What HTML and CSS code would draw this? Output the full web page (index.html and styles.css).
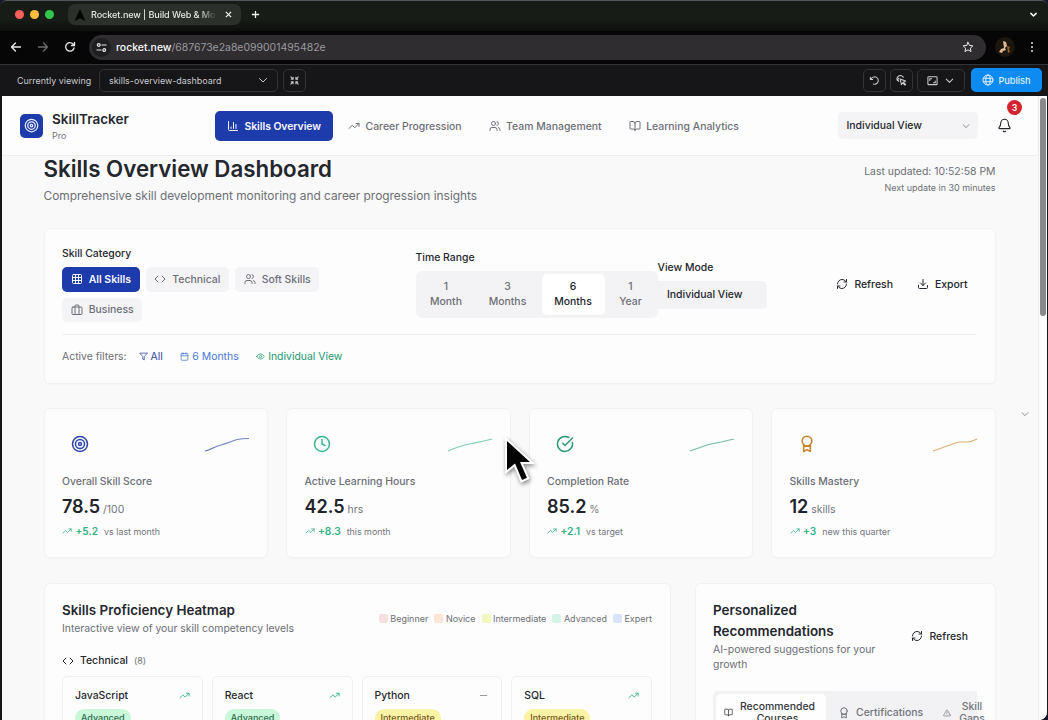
FILE: index.html
```html
<!DOCTYPE html>
<html lang="en">
<head>
    <meta charset="UTF-8">
    <meta name="viewport" content="width=device-width, initial-scale=1.0">
    <title>Rocket.new | Build Web &amp; Mobile Apps</title>
    <link rel="stylesheet" href="styles.css">
</head>
<body>
    <svg class="sprite" xmlns="http://www.w3.org/2000/svg">
        <symbol id="target" viewBox="0 0 24 24"><circle cx="12" cy="12" r="10"/><circle cx="12" cy="12" r="6"/><circle cx="12" cy="12" r="2"/></symbol>
        <symbol id="chart" viewBox="0 0 24 24"><path d="M3 3v16a2 2 0 0 0 2 2h16M8 17v-3M13 17V5M18 17V9"/></symbol>
        <symbol id="trend" viewBox="0 0 24 24"><path d="M22 7l-8.5 8.5-5-5L2 17M16 7h6v6"/></symbol>
        <symbol id="users" viewBox="0 0 24 24"><path d="M16 21v-2a4 4 0 0 0-4-4H6a4 4 0 0 0-4 4v2M22 21v-2a4 4 0 0 0-3-3.87M16 3.13a4 4 0 0 1 0 7.75"/><circle cx="9" cy="7" r="4"/></symbol>
        <symbol id="book" viewBox="0 0 24 24"><path d="M12 7v14M3 18a1 1 0 0 1-1-1V4a1 1 0 0 1 1-1h5a4 4 0 0 1 4 4 4 4 0 0 1 4-4h5a1 1 0 0 1 1 1v13a1 1 0 0 1-1 1h-6a3 3 0 0 0-3 3 3 3 0 0 0-3-3z"/></symbol>
        <symbol id="chevron" viewBox="0 0 24 24"><path d="M5 9l7 7 7-7"/></symbol>
        <symbol id="bell" viewBox="0 0 24 24"><path d="M10.3 21a1.94 1.94 0 0 0 3.4 0M3.3 15.3A1 1 0 0 0 4 17h16a1 1 0 0 0 .7-1.7C19.4 14 18 12.5 18 8A6 6 0 0 0 6 8c0 4.5-1.4 6-2.7 7.3"/></symbol>
        <symbol id="grid" viewBox="0 0 24 24"><rect x="3" y="3" width="18" height="18" rx="2"/><path d="M3 9h18M3 15h18M9 3v18M15 3v18"/></symbol>
        <symbol id="code" viewBox="0 0 24 24"><path d="M16 18l6-6-6-6M8 6l-6 6 6 6"/></symbol>
        <symbol id="case" viewBox="0 0 24 24"><rect x="2" y="6" width="20" height="15" rx="2"/><path d="M8 21V4a2 2 0 0 1 2-2h4a2 2 0 0 1 2 2v17"/></symbol>
        <symbol id="refresh" viewBox="0 0 24 24"><path d="M3 12a9 9 0 0 1 9-9 9.75 9.75 0 0 1 6.74 2.74L21 8M21 3v5h-5M21 12a9 9 0 0 1-9 9 9.75 9.75 0 0 1-6.74-2.74L3 16M8 16H3v5"/></symbol>
        <symbol id="download" viewBox="0 0 24 24"><path d="M21 15v4a2 2 0 0 1-2 2H5a2 2 0 0 1-2-2v-4M7 10l5 5 5-5M12 15V3"/></symbol>
        <symbol id="filter" viewBox="0 0 24 24"><path d="M22 3H2l8 9.46V19l4 2v-8.54z"/></symbol>
        <symbol id="calendar" viewBox="0 0 24 24"><rect x="3" y="4" width="18" height="18" rx="2"/><path d="M8 2v4M16 2v4M3 10h18"/></symbol>
        <symbol id="eye" viewBox="0 0 24 24"><path d="M2 12s4-7 10-7 10 7 10 7-4 7-10 7S2 12 2 12z"/><circle cx="12" cy="12" r="3"/></symbol>
        <symbol id="clock" viewBox="0 0 24 24"><circle cx="12" cy="12" r="10"/><path d="M12 6v6l4 2"/></symbol>
        <symbol id="check" viewBox="0 0 24 24"><path d="M21.8 10A10 10 0 1 1 17 3.34M9 11l3 3L22 4"/></symbol>
        <symbol id="award" viewBox="0 0 24 24"><circle cx="12" cy="8" r="6.500"/><path d="M7.500 13V22l4.500-2.500 4.500 2.500v-9M8 15.500q4-2 8 0"/></symbol>
        <symbol id="minus" viewBox="0 0 24 24"><path d="M5 12h14"/></symbol>
        <symbol id="alert" viewBox="0 0 24 24"><path d="M21.7 18l-8-14a2 2 0 0 0-3.4 0l-8 14A2 2 0 0 0 4 21h16a2 2 0 0 0 1.7-3zM12 9v4M12 17h.01"/></symbol>
        <symbol id="arrow" viewBox="0 0 24 24"><path d="M21 12H3M11 4l-8 8 8 8"/></symbol>
        <symbol id="reload" viewBox="0 0 24 24"><path d="M20 14a8.5 8.5 0 1 1-2-8l3 3M21 3v6h-6"/></symbol>
        <symbol id="tune" viewBox="0 0 24 24"><circle cx="6" cy="6.500" r="3"/><path d="M13 6.500h9M2 17.500h9"/><circle cx="18" cy="17.500" r="3"/></symbol>
        <symbol id="star" viewBox="0 0 24 24"><path d="M12 2.500l2.900 6.300 6.900.8-5.100 4.700 1.400 6.800-6.100-3.400-6.100 3.400 1.400-6.800-5.100-4.700 6.900-.8z"/></symbol>
        <symbol id="shrink" viewBox="0 0 24 24"><path d="M4 4l5 5M9 5v4H5M20 4l-5 5M15 5v4h4M4 20l5-5M9 19v-4H5M20 20l-5-5M15 19v-4h4"/></symbol>
        <symbol id="undo" viewBox="0 0 24 24"><path d="M3 5v5h5M3.500 10C6 5.500 9 4 12.500 4a8 8 0 1 1-3 15.500"/></symbol>
        <symbol id="pick" viewBox="0 0 24 24"><path d="M9 9l12 4-5 2.500 5 5-1.500 1.500-5-5L12 21zM3 12a7 7 0 0 1 13-7M6 14a5 5 0 0 1 0-7"/></symbol>
        <symbol id="screen" viewBox="0 0 24 24"><rect x="2" y="4" width="20" height="17" rx="1.500"/><path d="M6 12V8h4M18 13v4h-4"/></symbol>
        <symbol id="globe" viewBox="0 0 24 24"><circle cx="12" cy="12" r="10"/><ellipse cx="12" cy="12" rx="4.500" ry="10"/><path d="M3 8.500h18M3 15.500h18"/></symbol>
    </svg>

    <div class="window">
        <div class="tab-strip">
            <div class="lights"><i class="red"></i><i class="yellow"></i><i class="green"></i></div>
            <div class="tab">
                <svg class="tab-logo" viewBox="0 0 12 12"><path d="M6 0l5.500 12L6 9.500.5 12z"/></svg>
                <span class="tab-title">Rocket.new | Build Web &amp; Mo</span>
                <svg class="tab-close" viewBox="0 0 8 8"><path d="M1 1l6 6M7 1L1 7"/></svg>
            </div>
            <svg class="tab-add" viewBox="0 0 10 10"><path d="M5 1v8M1 5h8"/></svg>
            <svg class="icon tab-more"><use href="#chevron"/></svg>
        </div>
        <div class="address-row">
            <svg class="icon nav-btn"><use href="#arrow"/></svg>
            <svg class="icon nav-btn forward"><use href="#arrow"/></svg>
            <svg class="icon nav-btn"><use href="#reload"/></svg>
            <div class="address">
                <span class="site-info"><svg class="icon"><use href="#tune"/></svg></span>
                <span class="url"><b>rocket.new</b>/687673e2a8e099001495482e</span>
                <svg class="icon star"><use href="#star"/></svg>
            </div>
            <div class="avatar">
                <svg viewBox="0 0 20 20"><path class="skin" d="M8 4l3 1 1 4-2 2 1 2-3 1-1 2-3-1 2-3 3-1z"/><path class="gold" d="M12 9l3 1-1 2 1 3-2 1z"/></svg>
            </div>
            <div class="dots"><i></i><i></i><i></i></div>
        </div>
        <div class="toolbar">
            <span class="viewing">Currently viewing</span>
            <div class="page-select">skills-overview-dashboard <svg class="icon"><use href="#chevron"/></svg></div>
            <div class="tool"><svg class="icon"><use href="#shrink"/></svg></div>
            <div class="tool-group">
                <div class="tool"><svg class="icon"><use href="#undo"/></svg></div>
                <div class="tool"><svg class="icon"><use href="#pick"/></svg></div>
                <div class="tool wide"><svg class="icon"><use href="#screen"/></svg><svg class="icon"><use href="#chevron"/></svg></div>
                <div class="publish"><svg class="icon"><use href="#globe"/></svg>Publish</div>
            </div>
        </div>

        <div class="page">
            <header class="site-header">
                <div class="logo"><svg class="icon"><use href="#target"/></svg></div>
                <div class="brand">
                    <div class="brand-name">SkillTracker</div>
                    <div class="brand-plan">Pro</div>
                </div>
                <nav class="nav">
                    <a class="nav-link active"><svg class="icon"><use href="#chart"/></svg>Skills Overview</a>
                    <a class="nav-link"><svg class="icon"><use href="#trend"/></svg>Career Progression</a>
                    <a class="nav-link"><svg class="icon"><use href="#users"/></svg>Team Management</a>
                    <a class="nav-link"><svg class="icon"><use href="#book"/></svg>Learning Analytics</a>
                </nav>
                <div class="header-select">Individual View <svg class="icon"><use href="#chevron"/></svg></div>
                <div class="bell"><svg class="icon"><use href="#bell"/></svg><span class="count">3</span></div>
            </header>

            <main class="content">
                <section class="heading">
                    <div>
                        <h1>Skills Overview Dashboard</h1>
                        <p>Comprehensive skill development monitoring and career progression insights</p>
                    </div>
                    <div class="updated">
                        <div>Last updated: 10:52:58 PM</div>
                        <small>Next update in 30 minutes</small>
                    </div>
                </section>

                <section class="card filters">
                    <div class="filter-row">
                        <div class="field">
                            <label>Skill Category</label>
                            <div class="chips">
                                <span class="chip active"><svg class="icon"><use href="#grid"/></svg>All Skills</span>
                                <span class="chip"><svg class="icon"><use href="#code"/></svg>Technical</span>
                                <span class="chip"><svg class="icon"><use href="#users"/></svg>Soft Skills</span>
                                <span class="chip"><svg class="icon"><use href="#case"/></svg>Business</span>
                            </div>
                        </div>
                        <div class="field">
                            <label>Time Range</label>
                            <div class="ranges">
                                <span>1<br>Month</span>
                                <span>3<br>Months</span>
                                <span class="active">6<br>Months</span>
                                <span>1<br>Year</span>
                            </div>
                        </div>
                        <div class="field">
                            <label>View Mode</label>
                            <div class="view-mode">Individual View</div>
                        </div>
                        <div class="actions">
                            <span class="action"><svg class="icon"><use href="#refresh"/></svg>Refresh</span>
                            <span class="action"><svg class="icon"><use href="#download"/></svg>Export</span>
                        </div>
                    </div>
                    <div class="active-filters">
                        <span>Active filters:</span>
                        <span class="tag tag-category"><svg class="icon"><use href="#filter"/></svg>All</span>
                        <span class="tag tag-range"><svg class="icon"><use href="#calendar"/></svg>6 Months</span>
                        <span class="tag tag-view"><svg class="icon"><use href="#eye"/></svg>Individual View</span>
                    </div>
                </section>

                <section class="kpis">
                    <div class="card kpi">
                        <div class="kpi-top score"><svg class="icon"><use href="#target"/></svg><svg class="spark" viewBox="0 0 46 18"><path d="M1 16C6 15 9 12.500 14 11S26 7 33 4.500q5-1 12-1"/></svg></div>
                        <div class="kpi-label">Overall Skill Score</div>
                        <div class="kpi-value"><b>78.5</b> /100</div>
                        <div class="kpi-delta"><svg class="icon"><use href="#trend"/></svg><b>+5.2</b> vs last month</div>
                    </div>
                    <div class="card kpi">
                        <div class="kpi-top hours"><svg class="icon"><use href="#clock"/></svg><svg class="spark" viewBox="0 0 46 18"><path d="M1 16C10 12 18 10 25 8.500S38 6 45 4"/></svg></div>
                        <div class="kpi-label">Active Learning Hours</div>
                        <div class="kpi-value"><b>42.5</b> hrs</div>
                        <div class="kpi-delta"><svg class="icon"><use href="#trend"/></svg><b>+8.3</b> this month</div>
                    </div>
                    <div class="card kpi">
                        <div class="kpi-top completion"><svg class="icon"><use href="#check"/></svg><svg class="spark" viewBox="0 0 46 18"><path d="M1 16l17-6q9-2 14-3l13-3"/></svg></div>
                        <div class="kpi-label">Completion Rate</div>
                        <div class="kpi-value"><b>85.2</b> %</div>
                        <div class="kpi-delta"><svg class="icon"><use href="#trend"/></svg><b>+2.1</b> vs target</div>
                    </div>
                    <div class="card kpi">
                        <div class="kpi-top mastery"><svg class="icon"><use href="#award"/></svg><svg class="spark" viewBox="0 0 46 18"><path d="M1 16l17-6q7-3 11-3h7q4-.5 9-3"/></svg></div>
                        <div class="kpi-label">Skills Mastery</div>
                        <div class="kpi-value"><b>12</b> skills</div>
                        <div class="kpi-delta"><svg class="icon"><use href="#trend"/></svg><b>+3</b> new this quarter</div>
                    </div>
                </section>

                <div class="columns">
                    <section class="card heatmap">
                        <div class="heatmap-head">
                            <div>
                                <h2>Skills Proficiency Heatmap</h2>
                                <p>Interactive view of your skill competency levels</p>
                            </div>
                            <div class="legend">
                                <span><i class="beginner"></i>Beginner</span>
                                <span><i class="novice"></i>Novice</span>
                                <span><i class="intermediate"></i>Intermediate</span>
                                <span><i class="advanced"></i>Advanced</span>
                                <span><i class="expert"></i>Expert</span>
                            </div>
                        </div>
                        <div class="group-title"><svg class="icon"><use href="#code"/></svg>Technical <small>(8)</small></div>
                        <div class="skills">
                            <div class="skill"><div class="skill-name">JavaScript <svg class="icon"><use href="#trend"/></svg></div><span class="badge advanced">Advanced</span></div>
                            <div class="skill"><div class="skill-name">React <svg class="icon"><use href="#trend"/></svg></div><span class="badge advanced">Advanced</span></div>
                            <div class="skill"><div class="skill-name">Python <svg class="icon flat"><use href="#minus"/></svg></div><span class="badge intermediate">Intermediate</span></div>
                            <div class="skill"><div class="skill-name">SQL <svg class="icon"><use href="#trend"/></svg></div><span class="badge intermediate">Intermediate</span></div>
                        </div>
                    </section>
                    <section class="card recs">
                        <div class="recs-head">
                            <div>
                                <h2>Personalized Recommendations</h2>
                                <p>AI-powered suggestions for your growth</p>
                            </div>
                            <span class="action"><svg class="icon"><use href="#refresh"/></svg>Refresh</span>
                        </div>
                        <div class="tabs">
                            <span class="rec-tab active"><svg class="icon"><use href="#book"/></svg><em>Recommended<br>Courses</em></span>
                            <span class="rec-tab certs"><svg class="icon"><use href="#award"/></svg><em>Certifications</em></span>
                            <span class="rec-tab gaps"><svg class="icon"><use href="#alert"/></svg><em>Skill<br>Gaps</em></span>
                        </div>
                    </section>
                </div>
            </main>

            <div class="scrollbar"><div class="thumb"></div></div>
            <svg class="icon side-toggle"><use href="#chevron"/></svg>
        </div>
    </div>

    <svg class="cursor" viewBox="0 0 40 52"><path d="M6 7v29l8-6.500 7 16.500 5-2.200L19 28h10z"/></svg>
</body>
</html>
```
FILE: styles.css
```css
* {
    box-sizing: border-box;
}

body {
    margin: 0;
    width: 1048px;
    height: 720px;
    overflow: hidden;
    background: #17182a;
    font-family: Inter, "Liberation Sans", sans-serif;
    font-size: 10.43px;
    color: #24272d;
}

h1, h2, p {
    margin: 0;
}

.sprite {
    display: none;
}

.icon {
    width: 12px;
    height: 12px;
    flex: none;
    fill: none;
    stroke: currentColor;
    stroke-width: 2;
    stroke-linecap: round;
    stroke-linejoin: round;
}

.window {
    height: 720px;
    display: flex;
    flex-direction: column;
    overflow: hidden;
    border-top: 1px solid #55565c;
    border-radius: 7px 7px 8px 0;
    background: #161518;
}

/* Browser chrome */
.tab-strip {
    height: 30px;
    flex: none;
    display: flex;
    align-items: center;
    padding: 0 10px 3px 15px;
    background: linear-gradient(#171c16 60%, #0d0f0d);
}

.lights {
    display: flex;
    gap: 6px;
    margin-right: 14px;
}

.lights i {
    width: 9px;
    height: 9px;
    border-radius: 50%;
}

.red { background: #fb5f5b; }
.yellow { background: #fbbd3c; }
.green { background: #2fc84c; }

.tab {
    width: 173px;
    height: 21px;
    display: flex;
    align-items: center;
    padding: 0 8px 0 6px;
    border-radius: 7px;
    background: #2b302b;
    color: #e4e6e3;
}

.tab-logo {
    width: 12px;
    height: 12px;
    margin-right: 5px;
    fill: #050705;
}

.tab-title {
    width: 126px;
    font-size: 9.1px;
    font-weight: 500;
    letter-spacing: -0.1px;
    white-space: nowrap;
    -webkit-mask-image: linear-gradient(90deg, #000 86%, transparent);
    mask-image: linear-gradient(90deg, #000 86%, transparent);
}

.tab-close, .tab-add {
    width: 7px;
    height: 7px;
    margin-left: auto;
    fill: none;
    stroke: #f1f1f1;
    stroke-width: 1.4;
    margin-right: 1px;
}

.tab-add {
    width: 9px;
    height: 9px;
    margin-left: 10px;
}

.tab-more {
    margin-left: auto;
    width: 9px;
    height: 9px;
    color: #fff;
    stroke-width: 3.8;
}

.address-row {
    height: 33px;
    flex: none;
    display: flex;
    align-items: center;
    padding: 0 13px 1px 10px;
    background: #060607;
    color: #e8e8e9;
}

.nav-btn {
    width: 12px;
    height: 12px;
    margin-right: 15px;
    stroke-width: 2.7;
}

.nav-btn.forward {
    transform: scaleX(-1);
    color: #6d6d70;
}

.address {
    width: 897px;
    height: 25px;
    display: flex;
    align-items: center;
    margin-left: -2px;
    padding: 0 12px 0 3px;
    border-radius: 13px;
    background: #2f2d30;
}

.site-info {
    width: 19px;
    height: 19px;
    display: grid;
    place-items: center;
    margin-right: 5px;
    border-radius: 50%;
    background: #1e1d20;
}

.site-info .icon {
    width: 11px;
    height: 11px;
    stroke-width: 2.6;
}

.url {
    font-size: 10.45px;
    color: #9b9a9e;
}

.url b {
    font-weight: 500;
    color: #fafafa;
}

.star {
    margin-left: auto;
}

.avatar {
    width: 20px;
    height: 20px;
    margin-left: 9px;
    border-radius: 50%;
    background: #1b160e;
}

.avatar .skin { fill: #e3b991; }
.avatar .gold { fill: #8c611c; }

.dots {
    display: grid;
    gap: 2px;
    margin-left: auto;
    margin-right: 2px;
}

.dots i {
    width: 2px;
    height: 2px;
    border-radius: 50%;
    background: #ddd;
}

.toolbar {
    height: 32px;
    flex: none;
    display: flex;
    align-items: center;
    padding: 0 6px 1px 17px;
    border-top: 1px solid #343337;
    background: #161518;
    color: #c9c9cc;
    font-size: 9.2px;
}

.viewing {
    width: 82px;
    font-size: 8.95px;
}

.page-select {
    width: 179px;
    height: 23px;
    display: flex;
    align-items: center;
    justify-content: space-between;
    padding: 0 8px 0 9px;
    border: 1px solid #343337;
    border-radius: 5px;
    font-size: 8.95px;
}

.tool {
    width: 23px;
    height: 23px;
    display: flex;
    align-items: center;
    justify-content: center;
    border: 1px solid #343337;
    border-radius: 5px;
}

.page-select + .tool {
    margin-left: 5px;
}

.tool .icon {
    width: 11px;
    height: 11px;
    stroke-width: 2.3;
}

.tool-group {
    display: flex;
    align-items: center;
    gap: 4px;
    margin-left: auto;
}

.tool.wide {
    width: 48px;
    gap: 6px;
    margin-right: 2px;
}

.publish {
    width: 71px;
    height: 24px;
    display: flex;
    align-items: center;
    justify-content: center;
    gap: 4px;
    border-radius: 5px;
    background: #0d8bf0;
    color: #dff0ff;
    font-weight: 500;
}

/* App */
.page {
    flex: 1;
    position: relative;
    min-height: 0;
    margin: 0 1px 0 2px;
    overflow: hidden;
    background: #f9f9fa;
    border-radius: 0 0 8px 0;
}

.site-header {
    height: 60px;
    display: flex;
    align-items: center;
    padding-left: 18px;
    border-bottom: 1px solid #eeeef0;
    background: #fdfdfe;
    margin-right: 10px;
}

.logo {
    width: 23px;
    height: 24px;
    display: grid;
    place-items: center;
    border-radius: 5px;
    background: #1d3baa;
    color: #e8ecff;
}

.logo .icon {
    width: 15px;
    height: 15px;
}

.brand {
    width: 163px;
    margin-left: 9px;
    padding-top: 3px;
}

.brand-name {
    font-size: 13.5px;
    font-weight: 600;
    line-height: 17px;
}

.brand-plan {
    font-size: 9px;
    line-height: 15px;
    color: #72747b;
}

.nav {
    display: flex;
    gap: 3px;
    padding-top: 1px;
}

.nav-link {
    height: 30px;
    display: flex;
    align-items: center;
    gap: 5.5px;
    padding: 0 12px;
    border-radius: 5px;
    font-weight: 500;
    color: #6d6f76;
    white-space: nowrap;
}

.nav-link.active {
    background: #1d3baa;
    color: #f5f6ff;
    font-weight: 600;
    letter-spacing: -0.05px;
}

.header-select {
    width: 140px;
    height: 27px;
    display: flex;
    align-items: center;
    justify-content: space-between;
    margin-left: auto;
    padding: 0 7px 0 9px;
    border-radius: 5px;
    background: #f4f4f6;
    font-weight: 500;
}

.header-select .icon {
    width: 10px;
    height: 10px;
    color: #77797f;
}

.bell {
    position: relative;
    margin: 0 25px 0 19.5px;
    height: 15px;
}

.bell .icon {
    width: 15px;
    height: 15px;
    stroke-width: 1.8;
}

.count {
    position: absolute;
    top: -18px;
    left: 10px;
    width: 15px;
    height: 15px;
    border-radius: 50%;
    background: #d2232f;
    color: #fff;
    font-size: 8.8px;
    font-weight: 600;
    line-height: 15px;
    text-align: center;
}

.content {
    width: 952px;
    margin-left: 41.5px;
}

.heading {
    height: 71.5px;
    display: flex;
    justify-content: space-between;
}

.heading h1 {
    margin-top: -1px;
    font-size: 22.3px;
    font-weight: 600;
    line-height: 27px;
}

.heading p {
    margin-top: 5px;
    font-size: 11.9px;
    line-height: 18px;
    color: #6d6f76;
}

.updated {
    padding-top: 8px;
    text-align: right;
    line-height: 16px;
    color: #6d6f76;
}

.updated small {
    display: block;
    font-size: 8.95px;
}

.card {
    border: 1px solid #f2f2f4;
    border-radius: 6px;
    background: #fdfdfe;
    box-shadow: 0 1px 2px rgba(0, 0, 0, 0.02);
}

.filters {
    height: 156px;
    padding: 17.5px 17.5px 0;
}

.filter-row {
    display: grid;
    grid-template-columns: 353.5px 242px 109px 1fr;
    align-items: center;
    padding-bottom: 11.5px;
    border-bottom: 1px solid #efeff2;
}

.field label {
    display: block;
    height: 15px;
    margin-bottom: 6px;
    font-weight: 500;
    line-height: 15px;
}

.chips {
    display: flex;
    flex-wrap: wrap;
    gap: 6px;
    width: 290px;
}

.chip {
    height: 24.5px;
    display: flex;
    align-items: center;
    gap: 6px;
    padding: 0 8.7px;
    border-radius: 5px;
    background: #f4f4f6;
    color: #6d6f76;
    font-weight: 500;
}

.chip.active {
    background: #1d3baa;
    color: #f5f6ff;
    font-weight: 600;
}

.ranges {
    width: 242px;
    height: 47px;
    display: flex;
    padding: 3px;
    border-radius: 6px;
    background: #f3f3f5;
    color: #6d6f76;
    font-weight: 500;
    line-height: 15px;
    text-align: center;
}

.ranges span {
    flex: 0 0 63px;
    padding: 5px 0 0;
    border-radius: 5px;
}

.ranges span:first-child {
    flex-basis: 55px;
}

.ranges span:nth-child(2) {
    flex-basis: 68px;
}

.ranges .active {
    background: #fff;
    color: #24272d;
}

.ranges span:last-child {
    flex-basis: 52px;
}

.view-mode {
    height: 28px;
    padding-left: 9.5px;
    border-radius: 0 5px 5px 0;
    background: #f3f3f5;
    line-height: 28px;
    font-weight: 500;
}

.actions {
    display: flex;
    justify-content: flex-end;
    gap: 24px;
    padding-right: 9.5px;
}

.action {
    display: flex;
    align-items: center;
    gap: 6px;
    font-weight: 500;
}

.active-filters {
    display: flex;
    align-items: center;
    height: 15px;
    margin-top: 14px;
    color: #6d6f76;
}

.tag {
    display: flex;
    align-items: center;
    gap: 3px;
    margin-left: 17.5px;
}

.tag .icon {
    width: 9px;
    height: 9px;
}

.tag-category {
    margin-left: 12px;
    color: #3343a0;
}

.tag-range { color: #4a78d6; }
.tag-view { color: #219a70; }

.kpis {
    display: grid;
    grid-template-columns: repeat(4, 1fr);
    gap: 18px;
    margin-top: 24px;
}

.kpi {
    height: 150px;
    padding: 17px 17px 17px 17.5px;
}

.kpi-top {
    height: 36px;
    display: flex;
    align-items: center;
    justify-content: space-between;
    padding-left: 8.5px;
}

.kpi-top .icon {
    width: 18px;
    height: 18px;
}

.kpi-top .spark {
    width: 46px;
    height: 18px;
    fill: none;
    stroke: currentColor;
    stroke-width: 1.2;
    opacity: 0.65;
}

.kpi-top.score { color: #2e43a4; }
.kpi-top.hours { color: #38b58a; }
.kpi-top.completion { color: #2a9872; }
.kpi-top.mastery { color: #c9832a; }

.kpi-label {
    margin-top: 12px;
    line-height: 15px;
    font-weight: 500;
    color: #6d6f76;
}

.kpi-value {
    margin-top: 6px;
    line-height: 24px;
    color: #73757c;
}

.kpi-value b {
    font-size: 18px;
    font-weight: 600;
    color: #202329;
}

.kpi-delta {
    display: flex;
    align-items: center;
    height: 14px;
    margin-top: 2.5px;
    font-size: 8.9px;
    color: #73757c;
}

.kpi-delta .icon {
    width: 10px;
    height: 10px;
    margin-right: 3.5px;
    color: #38b58a;
}

.kpi-delta b {
    margin-right: 6px;
    font-size: 10.2px;
    font-weight: 600;
    color: #30b283;
}

.columns {
    display: grid;
    grid-template-columns: 627px 301px;
    gap: 24px;
    margin-top: 25px;
}

.columns .card {
    height: 300px;
    padding: 16.5px 17.5px;
}

.columns h2 {
    font-size: 13.4px;
    font-weight: 600;
    line-height: 21px;
}

.columns p {
    line-height: 15px;
    color: #6d6f76;
}

.heatmap-head {
    display: flex;
    justify-content: space-between;
    align-items: center;
}

.legend {
    display: flex;
    gap: 6px;
    font-size: 9px;
    color: #6d6f76;
}

.legend span {
    display: flex;
    align-items: center;
    gap: 2.5px;
}

.legend i {
    width: 9px;
    height: 9px;
    border-radius: 2px;
}

.legend .beginner { background: #f6dfe3; }
.legend .novice { background: #fce5d5; }
.legend .intermediate { background: #f3f8c0; }
.legend .advanced { background: #d7f4e9; }
.legend .expert { background: #dbe2fb; }

.group-title {
    display: flex;
    align-items: center;
    gap: 6px;
    margin-top: 17px;
    height: 15px;
    font-weight: 500;
}

.group-title small {
    font-size: 8.95px;
    font-weight: 400;
    color: #6d6f76;
}

.skills {
    display: grid;
    grid-template-columns: repeat(4, 1fr);
    gap: 9px;
    margin-top: 8px;
}

.skill {
    height: 90px;
    padding: 11px 12px;
    border: 1px solid #f0f0f2;
    border-radius: 5px;
}

.skill-name {
    display: flex;
    justify-content: space-between;
    align-items: center;
    height: 15px;
    margin-bottom: 6px;
    font-weight: 500;
}

.skill-name .icon {
    width: 11px;
    height: 11px;
    color: #38b58a;
}

.skill-name .flat {
    color: #8c8e94;
}

.badge {
    display: inline-block;
    padding: 0 6px;
    border-radius: 9px;
    font-size: 9px;
    font-weight: 500;
    line-height: 18px;
}

.badge.advanced {
    background: #c9f7da;
    color: #2b6b48;
}

.badge.intermediate {
    background: #fbf3a5;
    color: #75561d;
}

.recs-head {
    display: flex;
    align-items: center;
    justify-content: space-between;
    padding-right: 9px;
}

.recs-head > div {
    width: 175px;
}

.tabs {
    display: flex;
    width: 264px;
    height: 43px;
    margin-top: 19px;
    padding: 3px 0 3px 3px;
    border-radius: 5px 0 0 5px;
    background: #f2f2f4;
    white-space: nowrap;
}

.rec-tab {
    display: flex;
    flex: none;
    align-items: center;
    gap: 8px;
    padding: 0 10px 0 8px;
    border-radius: 5px;
    color: #73757c;
    font-weight: 500;
    line-height: 12px;
    text-align: center;
}

.rec-tab.active {
    width: 110px;
    gap: 7px;
    background: #fefefe;
    color: #33363c;
}

.rec-tab .icon {
    width: 9px;
    height: 9px;
}

.rec-tab.certs {
    gap: 6px;
    padding: 0 11px 0 12px;
}

.rec-tab.certs .icon {
    width: 12px;
    height: 12px;
}

.rec-tab.gaps {
    padding: 0 0 0 9px;
}

.rec-tab.gaps .icon {
    width: 8px;
    height: 8px;
}

.rec-tab em {
    font-style: normal;
}

.scrollbar {
    position: absolute;
    top: 0;
    right: 0;
    width: 9px;
    height: 100%;
    padding: 2px 2px 0 1px;
    border-left: 1px solid #ededf0;
    background: #fbfbfc;
}

.thumb {
    width: 6px;
    height: 218px;
    border-radius: 3px;
    background: #89898b;
}

.side-toggle {
    position: absolute;
    top: 313px;
    right: 17px;
    width: 10px;
    height: 10px;
    color: #7b7d83;
}

/* Mouse pointer over the cards */
.cursor {
    position: absolute;
    left: 501px;
    top: 434px;
    width: 40px;
    height: 52px;
    fill: #050505;
    stroke: #fff;
    stroke-width: 4;
    paint-order: stroke;
    filter: drop-shadow(1px 2px 2px rgba(0, 0, 0, 0.45));
}
```
